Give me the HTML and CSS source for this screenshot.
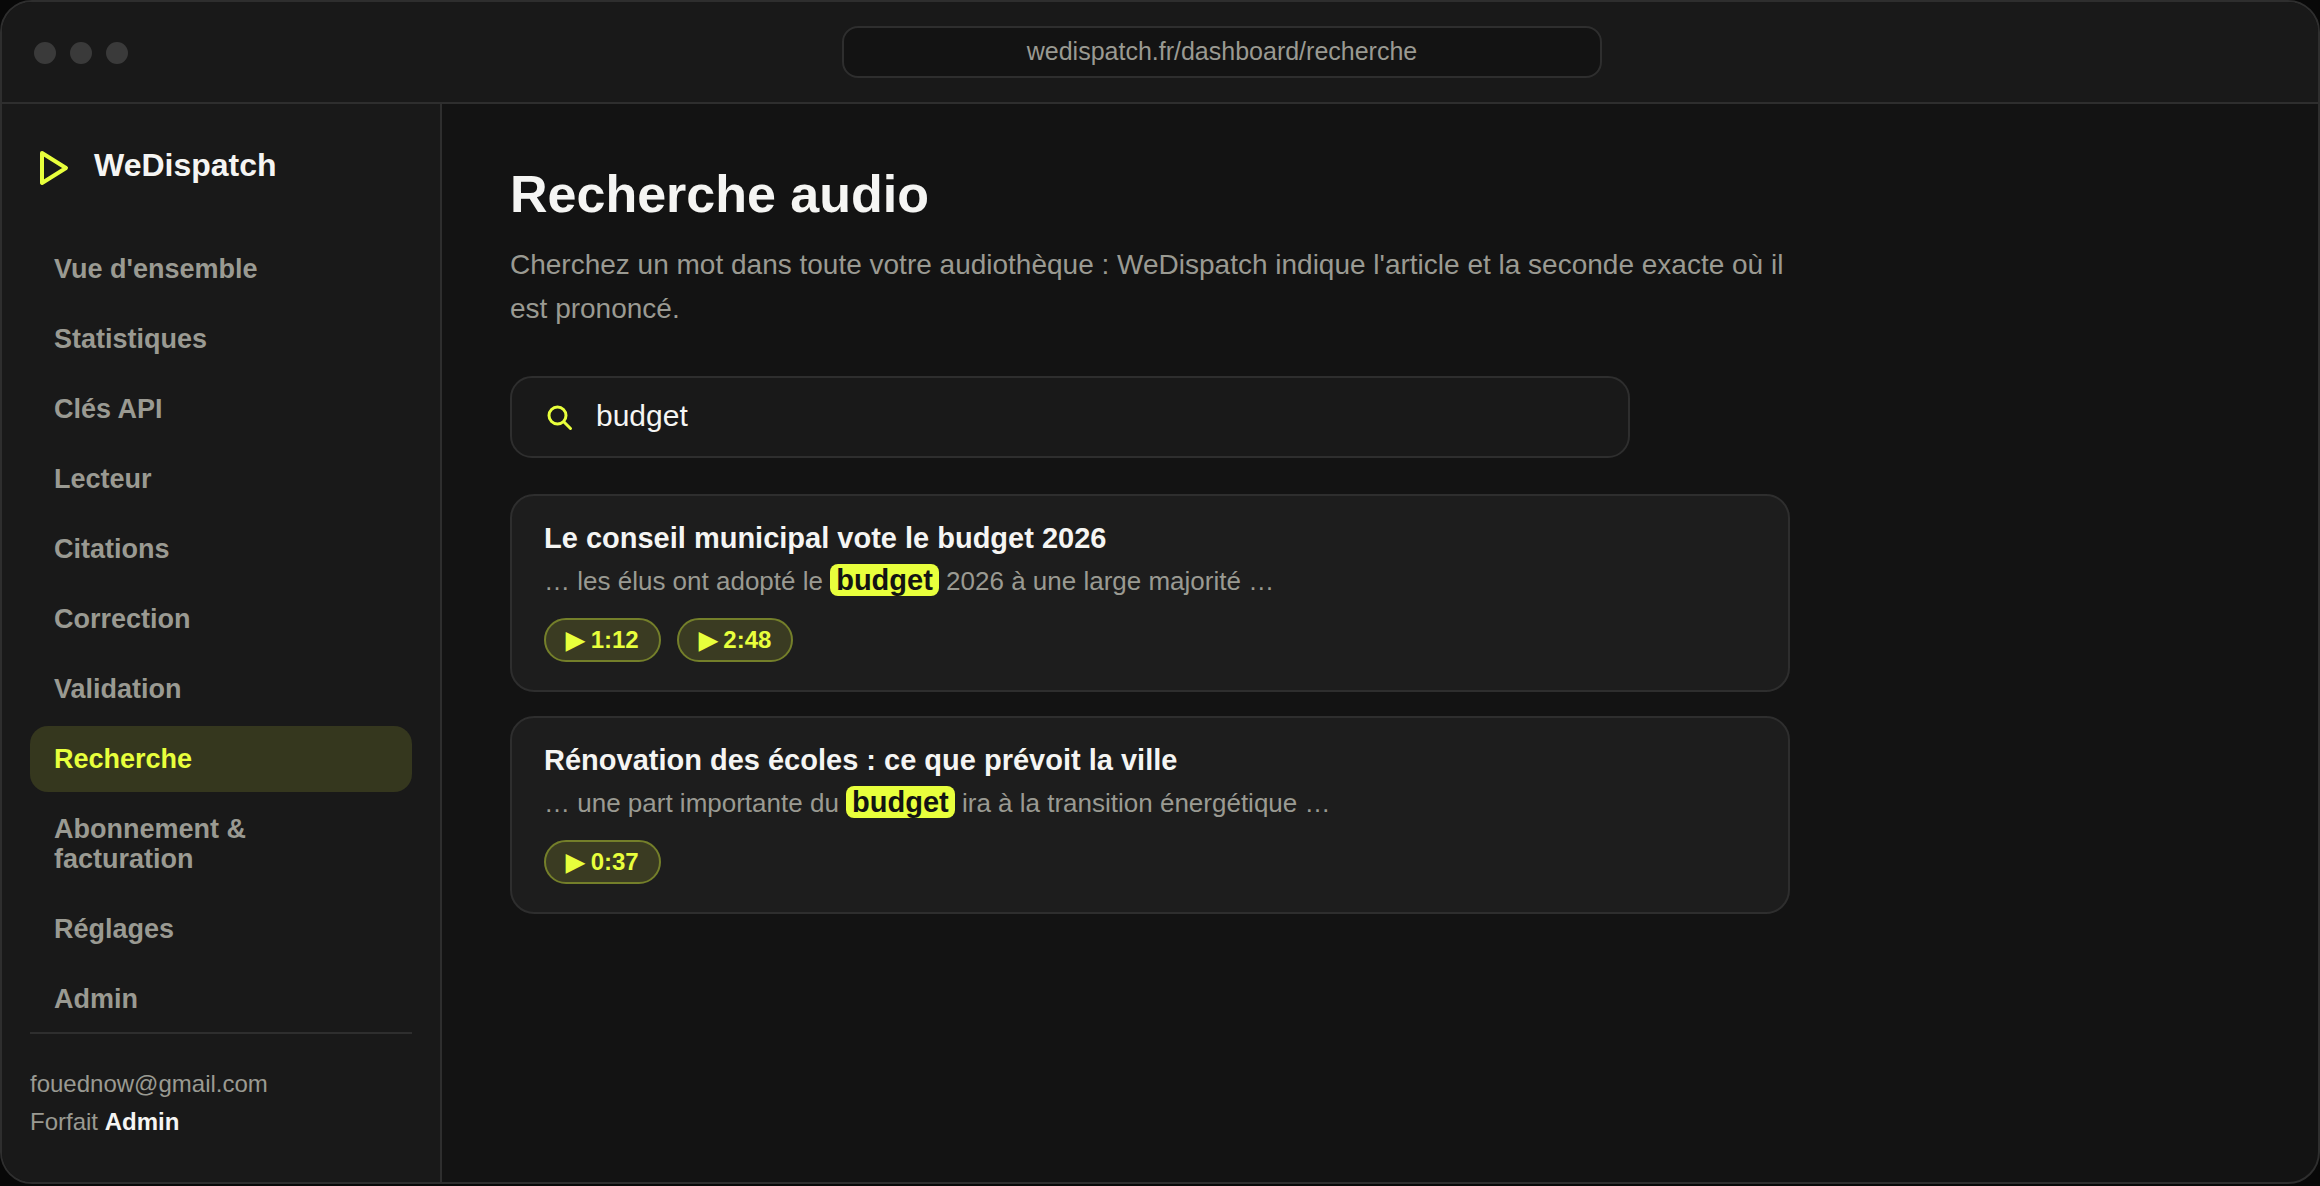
FILE: index.html
```html
<!DOCTYPE html>
<html lang="fr">
<head>
<meta charset="utf-8">
<title>Recherche audio – WeDispatch</title>
<meta name="viewport" content="width=device-width, initial-scale=1">
<link rel="stylesheet" href="styles.css">
</head>
<body>
<div class="window">
  <header class="topbar">
    <div class="dots"><span class="dot"></span><span class="dot"></span><span class="dot"></span></div>
    <input class="address" type="text" aria-label="Adresse" value="wedispatch.fr/dashboard/recherche" readonly>
  </header>
  <div class="body">
    <aside class="sidebar">
      <div class="brand">
        <svg class="brand-icon" viewBox="0 0 48 48" aria-hidden="true"><path d="M12 9 L36 24 L12 39 Z"/></svg>
        <span class="brand-name">WeDispatch</span>
      </div>
      <nav class="nav">
        <a class="nav-item" href="#">Vue d'ensemble</a>
        <a class="nav-item" href="#">Statistiques</a>
        <a class="nav-item" href="#">Clés API</a>
        <a class="nav-item" href="#">Lecteur</a>
        <a class="nav-item" href="#">Citations</a>
        <a class="nav-item" href="#">Correction</a>
        <a class="nav-item" href="#">Validation</a>
        <a class="nav-item active" href="#" aria-current="page">Recherche</a>
        <a class="nav-item" href="#">Abonnement &amp; facturation</a>
        <a class="nav-item" href="#">Réglages</a>
        <a class="nav-item" href="#">Admin</a>
      </nav>
      <div class="account">
        <div>fouednow@gmail.com</div>
        <div>Forfait <strong>Admin</strong></div>
      </div>
    </aside>
    <main class="main">
      <h1>Recherche audio</h1>
      <p class="lead">Cherchez un mot dans toute votre audiothèque : WeDispatch indique l'article et la seconde exacte où il est prononcé.</p>
      <label class="search">
        <svg class="search-icon" viewBox="0 0 28 28" aria-hidden="true"><circle cx="11.5" cy="12.5" r="8.5"/><path d="M18 19 L24.5 25.5"/></svg>
        <input class="search-input" type="text" aria-label="Rechercher un mot" value="budget">
      </label>
      <div class="results">
        <article class="card">
          <h2>Le conseil municipal vote le budget 2026</h2>
          <p class="snippet">… les élus ont adopté le <mark>budget</mark> 2026 à une large majorité …</p>
          <div class="times">
            <button class="time" type="button">▶ 1:12</button>
            <button class="time" type="button">▶ 2:48</button>
          </div>
        </article>
        <article class="card">
          <h2>Rénovation des écoles : ce que prévoit la ville</h2>
          <p class="snippet">… une part importante du <mark>budget</mark> ira à la transition énergétique …</p>
          <div class="times">
            <button class="time" type="button">▶ 0:37</button>
          </div>
        </article>
      </div>
    </main>
  </div>
</div>
</body>
</html>
```
FILE: styles.css
```css
:root {
  --bg: #131313;
  --panel: #191919;
  --card: #1d1d1d;
  --line: #2e2e2e;
  --text: #f5f5f3;
  --muted: #9a9a92;
  --lime: #e8ff3c;
}

* { box-sizing: border-box; }

body {
  margin: 0;
  background: #080808;
  color: var(--text);
  font-family: "Liberation Sans", Arial, sans-serif;
}

h1, h2, p { margin: 0; }

input, button { font-family: inherit; }

.window {
  display: flex;
  flex-direction: column;
  min-height: calc(100vh - 2px);
  border: 2px solid var(--line);
  border-radius: 32px;
  overflow: hidden;
  background: var(--bg);
}

/* Browser bar */
.topbar {
  display: flex;
  align-items: center;
  gap: 30px;
  padding: 24px 32px;
  border-bottom: 2px solid var(--line);
  background: var(--panel);
}

.dots {
  display: flex;
  gap: 14px;
  padding-top: 2px;
}

.dot {
  width: 22px;
  height: 22px;
  border-radius: 50%;
  background: #3a3a3a;
}

.address {
  width: 760px;
  height: 52px;
  margin: 0 auto;
  padding: 0 24px 2px;
  border: 2px solid var(--line);
  border-radius: 16px;
  background: var(--bg);
  color: var(--muted);
  font-size: 25px;
  text-align: center;
  outline: 0;
}

.body { display: flex; flex: 1; }

/* Sidebar */
.sidebar {
  display: flex;
  flex-direction: column;
  flex: 0 0 440px;
  padding: 40px 28px;
  border-right: 2px solid var(--line);
  background: var(--panel);
}

.brand {
  display: flex;
  gap: 16px;
  margin-bottom: 44px;
}

.brand-icon {
  width: 48px;
  height: 48px;
  fill: none;
  stroke: var(--lime);
  stroke-width: 4;
  stroke-linejoin: round;
}

.brand-name {
  font-size: 32px;
  font-weight: 700;
  line-height: 42px;
}

.nav {
  display: flex;
  flex-direction: column;
  gap: 4px;
}

.nav-item {
  padding: 18px 24px;
  border-radius: 18px;
  color: var(--muted);
  font-size: 27px;
  font-weight: 700;
  line-height: 30px;
  text-decoration: none;
}

.nav-item.active {
  background: #35371e;
  color: var(--lime);
}

.account {
  margin-top: auto;
  padding: 31px 0 1px;
  border-top: 2px solid var(--line);
  color: var(--muted);
  font-size: 24px;
  line-height: 38px;
}

.account strong { color: var(--text); }

/* Main column */
.main {
  flex: 1;
  padding: 60px 68px;
}

h1 {
  font-size: 52px;
  line-height: 60px;
}

.lead {
  max-width: 1280px;
  margin-top: 19px;
  color: var(--muted);
  font-size: 28px;
  line-height: 44px;
}

.search {
  display: flex;
  align-items: center;
  gap: 22px;
  max-width: 1120px;
  height: 82px;
  margin-top: 45px;
  padding: 0 34px;
  border: 2px solid var(--line);
  border-radius: 22px;
  background: var(--panel);
}

.search-icon {
  width: 28px;
  height: 28px;
  fill: none;
  stroke: var(--lime);
  stroke-width: 3;
  stroke-linecap: round;
}

.search-input {
  flex: 1;
  padding: 0 0 2px;
  border: 0;
  background: none;
  color: var(--text);
  font-size: 30px;
  outline: 0;
}

.results {
  display: flex;
  flex-direction: column;
  gap: 24px;
  max-width: 1280px;
  margin-top: 36px;
}

.card {
  padding: 26px 32px 28px;
  border: 2px solid var(--line);
  border-radius: 24px;
  background: var(--card);
}

h2 {
  font-size: 29px;
  line-height: 32px;
}

.snippet {
  margin-top: 8px;
  color: var(--muted);
  font-size: 26px;
  line-height: 36px;
}

mark {
  padding: 0 6px;
  border-radius: 8px;
  background: var(--lime);
  color: var(--bg);
  font-size: 29px;
  font-weight: 700;
}

.times {
  display: flex;
  gap: 16px;
  margin-top: 19px;
}

.time {
  height: 44px;
  padding: 0 20px;
  border: 2px solid #747f2a;
  border-radius: 22px;
  background: #3a3b22;
  color: var(--lime);
  font-size: 24px;
  font-weight: 700;
}
```
